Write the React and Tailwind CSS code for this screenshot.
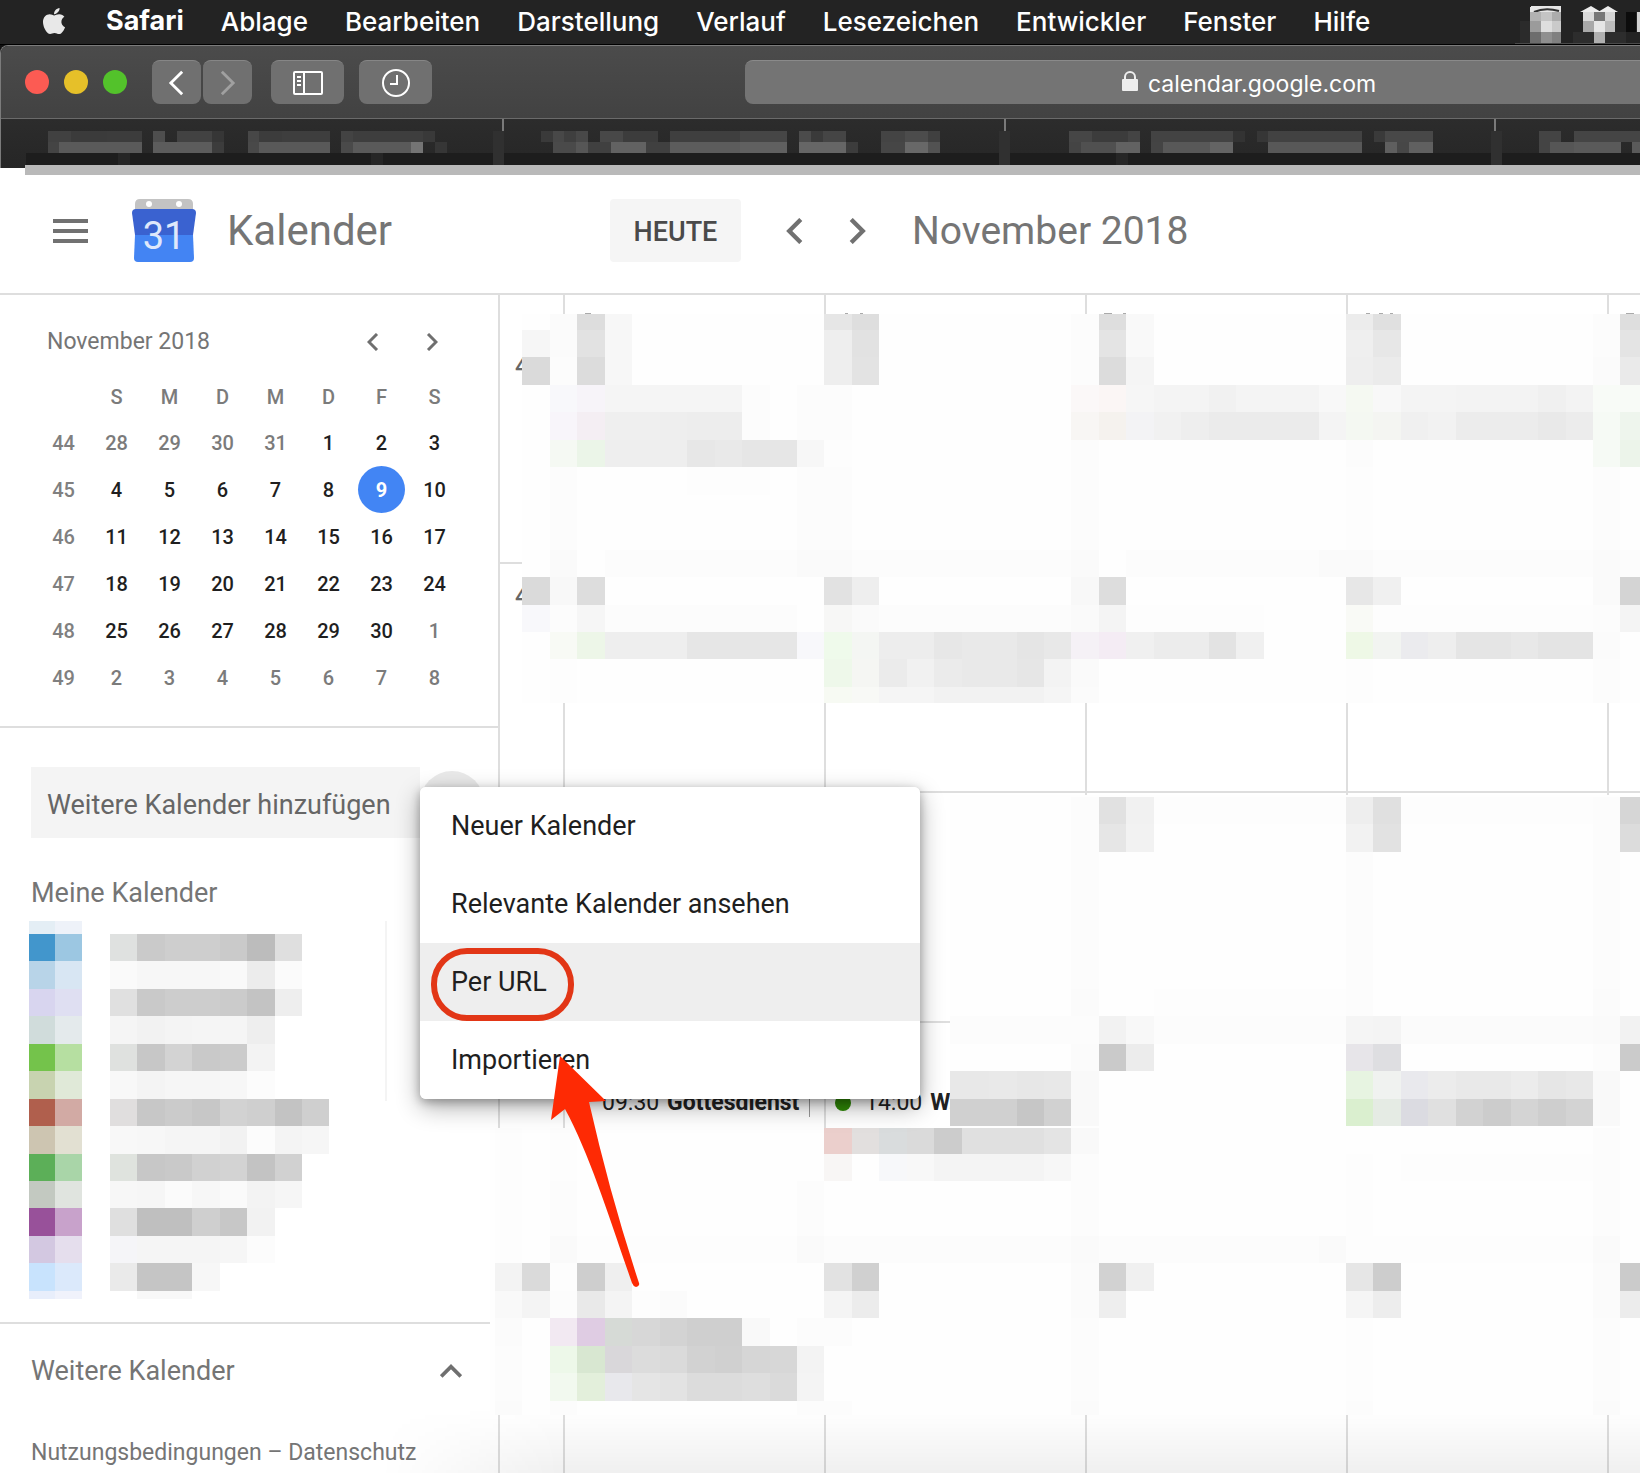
import React from "react";
import { FaApple } from "react-icons/fa";

const MENUS = ["Ablage", "Bearbeiten", "Darstellung", "Verlauf", "Lesezeichen", "Entwickler", "Fenster", "Hilfe"];

const WEEKS = [
  [44, [28, 29, 30, 31, 1, 2, 3]],
  [45, [4, 5, 6, 7, 8, 9, 10]],
  [46, [11, 12, 13, 14, 15, 16, 17]],
  [47, [18, 19, 20, 21, 22, 23, 24]],
  [48, [25, 26, 27, 28, 29, 30, 1]],
  [49, [2, 3, 4, 5, 6, 7, 8]],
];

// Censored month area: "row: col color[*span] ..." on a 27.45px raster.
const MONTH_TOP = {
  "-1": "2 fb|3 dd|4 f7|12 e6|13 de|21 fc|22 de|23 f9|31 ec|32 e0|40 fc|41 de",
  0: "1 f6|2 fb|3 e2|4 f7|12 ee|13 e2|21 fc|22 e4|23 f9|31 ef|32 e7|40 fc|41 e4",
  1: "1 da|2 fc|3 dc|4 f7|12 ee|13 e3|21 fc|22 dc|23 f5|31 ee|32 eb|40 fb|41 ea",
  2: "2 f8f8fb|3 f7f4f9|4 f5*5|9 fc|11 fc*2|21 fbf8f8|22 fbf6f5|23 f6|24 f4*2|26 f1|27 f4*3|30 f8|31 f5f9f2|32 f8|33 f4*2|35 f3*3|38 f0|39 f3|40 f8fbf7*2",
  3: "2 f8f5fa|3 f4eef3|4 ef*2|6 ee|7 ed*2|9 fc|11 fc*2|21 f8f6f4|22 f5f2ee|23 f3f3f5|24 f1|25 ee|26 eb*4|30 f4|31 f4f8f2|32 f4f5f2|33 f0|34 f2|35 ec*3|38 e9|39 ec|40 f6faf5|41 eef5ed",
  4: "2 f5f9f3|3 ebf5e8|4 ee*3|7 e7|8 e9|9 e6*2|11 f7|12 fd|21 fc|31 fc|40 f6faf5|41 ecf4ea",
  5: "2 fc|7 fd*3|11 fc*2|21 fc|31 fd|40 fc",
  6: "2 fc|11 fc*2|21 fc|31 fd|40 fc",
  7: "2 fc|11 fc*2|21 fc|31 fd|40 fc",
  8: "2 fa|4 fc*7|11 fa*2|13 fc*8|21 fa|23 fc*7|30 fa*2|32 fc*8|40 fa|41 fc",
  9: "1 da|2 f8|3 dd|12 e2|13 ee|21 f8|22 dd|31 e7|32 f0|40 fa|41 d4",
  10: "1 f8f8fb|2 fc|3 f6|4 fc*7|12 f7f7f6|13 fa|14 fc*7|21 fa|22 f4|23 fd*5|31 f9faf6|32 fd*8|40 fc|41 f4",
  11: "2 f8faf5|3 edf6e8|4 ee*3|7 e6*4|11 f8f8fb|12 effaeb|13 f4f6f3|14 ed*2|16 e7|17 e9*2|19 e5|20 e8|21 f5f1f6|22 f4ecf4|23 f0|24 ec*2|26 e3|27 f0|31 eef8e6|32 f2f4f1|33 ebebee|34 ee|35 e5*2|37 e8|38 e4*2|40 fb",
  12: "2 fd|12 eef8ea|13 f5f6f3|14 eb|15 f1|16 eb|17 e9*2|19 e6|20 f3|21 fa|31 fd|40 fc",
  13: "2 fd|12 f7faf3|13 f8f9f6|14 f5*2|16 f2*4|20 f5|21 fb|31 fd|40 fc",
};

const MONTH_RIGHT = {
  17: "21 fc|22 e1|23 f1|24 fd*7|31 ee|32 e0|33 fd*7|40 fc|41 d6",
  18: "21 fc|22 e6|23 f2|31 f2|32 e2|40 fc|41 dc",
  19: "21 fc|31 fc|40 fc",
  20: "21 fc|31 fc|40 fc",
  21: "21 fc|31 fc|40 fc",
  22: "21 fc|31 fc|40 fc",
  23: "21 fc|31 fc|40 fc",
  24: "21 fb|24 fd*7|31 fc|40 fb",
  25: "16 fc*6|22 f2|23 f8|24 fc*7|31 f5|32 f4|33 fb*7|40 fa|41 f2",
  26: "21 fb|22 ca|23 ec|31 e7e5e9|32 dedee1|40 fc|41 cb",
  27: "16 e8*2|18 e9|19 e7|20 e8|21 f9|31 e7f4e1|32 f0f2f0|33 e9e9ed|34 ec|35 e9*2|37 ec|38 e6|39 e8|40 f9",
  28: "16 d0*3|19 c6|20 d1|21 f9|31 daefcf|32 e5ebe4|33 dbdbe1|34 e0|35 d2|36 cc|37 d4|38 ce|39 d3|40 f9",
};

const MONTH_BOTTOM = {
  29: "0 fd|2 fd|12 ebcfcc|13 e2dfde|14 d9dcdd|15 da|16 cc|17 e0*3|20 e4|21 f9|40 fc",
  30: "0 fd|2 fd|12 f8f6f5|14 f7f8fa|15 f8|16 f4*4|20 f7|21 fc|31 fd|33 fd*7|40 fc",
  31: "0 fd|2 fc|11 fc|21 fc|31 fd|40 fc",
  32: "0 fd|2 fc|11 fc|21 fc|31 fd|40 fc",
  33: "0 fd|2 fa|3 fd*8|11 fa|12 fc*9|21 fa|22 fc*8|30 fa|31 fd*9|40 fa",
  34: "0 f3|1 da|2 fd|3 ce|4 ef|12 e2|13 d0|21 fb|22 d2|23 f0|31 e6|32 cd|40 fb|41 cb",
  35: "0 f9|1 f4|2 fc|3 e9|4 f4|5 fd|6 fb|12 f4|13 ec|21 fb|22 ee|31 f5|32 ed|40 fb|41 ec",
  36: "0 fb|2 f2e9f2|3 dfcce3|4 d6dad6|5 d7|6 d3|7 cf*2|9 f9|11 fc*2|21 fc|31 fd|40 fc",
  37: "0 fc|2 edf8e9|3 d8e7d1|4 d9d7da|5 dc|6 da|7 d2|8 d0|9 d6|10 d7|11 f3|21 fc|31 fd|40 fc",
  38: "0 fc|2 f2f9ef|3 e3efdb|4 e8e8ec|5 e5|6 e3|7 dc*2|9 de|10 da|11 f4|21 fc|31 fd|40 fc",
  39: "0 fb|2 fc|11 fc*2|21 fb|31 fc|40 fb",
};

const LIST = {
  21: "1 e4eef5|2 eef2f9",
  22: "1 4296cc|2 9cc7e2|4 dfe1e0|5 ca|6 ce*2|8 ca|9 bc|10 df",
  23: "1 b8d4e8|2 d8e6f3|4 fa|5 f7*3|8 f9|9 ec|10 fb",
  24: "1 d8d5ef|2 dfdff2|4 e0|5 c9|6 cd*2|8 cb|9 c3|10 ee",
  25: "1 d0dcdb|2 e4eaec|4 f5|5 f2|6 f4|7 f5*2|9 ee",
  26: "1 74c34b|2 b6dfa1|4 dfe1df|5 c7|6 d3|7 c9|8 cb|9 f3",
  27: "1 c8d3b0|2 e0e9d8|4 f8|5 f4|6 f6*2|8 f7|9 fc",
  28: "1 b05f4d|2 d2aaa4|4 e0dede|5 c7|6 cb|7 c7|8 d2|9 cf|10 c3|11 cf",
  29: "1 cdc5b1|2 e2e0d2|4 f8|5 f7|6 f5*2|8 f2|9 fc|10 f4|11 f6",
  30: "1 5caf58|2 a9d5a8|4 dfe3de|5 c7|6 c9|7 d1|8 d3|9 c3|10 d1",
  31: "1 c3c9c1|2 e0e4df|4 f7|5 f6|6 fb|7 f7|8 fa|9 f3|10 f6",
  32: "1 98519a|2 c8a2cb|4 df|5 bf*2|7 cf|8 c7|9 f2",
  33: "1 d3c8e1|2 e5deed|4 f5f5f8|5 f5*3|8 f6|9 fc",
  34: "1 c8e3fd|2 dbe9fb|4 ea|5 c5*2|7 f7",
  35: "1 e8eefb|2 f0f2fb|5 f8*2",
};

const CELL = 27.45;

function Mosaic({ data, originX, originY, clip, id, base }) {
  const [x0, y0, w, h] = clip;
  const cells = [];
  Object.entries(data).forEach(([row, line]) => {
    const r = Number(row);
    line.split("|").forEach((item) => {
      const [c, spec] = item.split(" ");
      const [hex, span] = spec.split("*");
      const fill = "#" + (hex.length === 2 ? hex + hex + hex : hex);
      const x = Math.round(originX + CELL * Number(c));
      const x2 = Math.round(originX + CELL * (Number(c) + Number(span || 1)));
      const y = Math.round(originY + CELL * r);
      const y2 = Math.round(originY + CELL * (r + 1));
      cells.push(<rect key={row + c} x={x} y={y} width={x2 - x} height={y2 - y} fill={fill} />);
    });
  });
  return (
    <g>
      <clipPath id={id}>
        <rect x={x0} y={y0} width={w} height={h} />
      </clipPath>
      <g clipPath={`url(#${id})`}>
        {base && <rect x={x0} y={y0} width={w} height={h} fill={base} />}
        {cells}
      </g>
    </g>
  );
}

function CensoredAreas() {
  return (
    <svg
      className="pointer-events-none absolute left-0 top-0 z-10"
      width="1640"
      height="1473"
      shapeRendering="crispEdges"
      aria-hidden="true"
    >
      <Mosaic id="mt" data={MONTH_TOP} originX={495} originY={330} clip={[522, 314, 1118, 389]} base="#fefefe" />
      <Mosaic id="mr" data={MONTH_RIGHT} originX={495} originY={330} clip={[950, 795, 690, 334]} base="#fefefe" />
      <Mosaic id="mb" data={MONTH_BOTTOM} originX={495} originY={330} clip={[490, 1128, 1150, 287]} base="#fefefe" />
      <Mosaic id="ml" data={LIST} originX={0} originY={330} clip={[29, 921, 358, 378]} />
      <path d="M386 921v180" stroke="#f4f4f4" strokeWidth="2" />
      <path d="M585 313h6M845 313h3M860 313h3M1104 313h8M1123 313h3M1366 313h4M1379 313h4M1390 313h3M1626 313h8" stroke="#aaa" strokeWidth="1" />
    </svg>
  );
}

// Censored tab titles: [x, right edge, grey] runs for the two visible raster rows.
const TAB_ROW_1 = [
  [47, 70, "#414141"], [70, 106, "#3b3b3b"], [106, 141, "#3c3c3c"], [152, 164, "#4e4e4e"], [176, 211, "#424242"],
  [211, 223, "#363636"], [247, 258, "#474747"], [258, 281, "#3c3c3c"], [281, 329, "#3e3e3e"], [340, 352, "#434343"],
  [352, 422, "#3e3e3e"], [422, 434, "#393939"], [540, 552, "#3a3a3a"], [552, 563, "#484848"], [563, 575, "#3f3f3f"],
  [575, 587, "#484848"], [599, 622, "#484848"], [622, 657, "#3c3c3c"], [669, 739, "#3f3f3f"], [739, 786, "#464646"],
  [798, 810, "#4b4b4b"], [810, 822, "#3a3a3a"], [822, 845, "#454545"], [880, 904, "#444444"], [904, 927, "#4c4c4c"],
  [927, 939, "#404040"], [1068, 1091, "#464646"], [1091, 1127, "#3c3c3c"], [1127, 1139, "#444444"],
  [1150, 1232, "#434343"], [1232, 1244, "#333333"], [1256, 1267, "#363636"], [1267, 1361, "#424242"],
  [1373, 1384, "#3a3a3a"], [1384, 1432, "#484848"], [1538, 1560, "#444444"], [1573, 1640, "#454545"],
];
const TAB_ROW_2 = [
  [47, 58, "#444444"], [58, 141, "#5a5a5a"], [152, 211, "#5c5c5c"], [211, 223, "#3c3c3c"], [247, 258, "#494949"],
  [258, 329, "#595959"], [340, 352, "#4a4a4a"], [352, 410, "#5a5a5a"], [410, 422, "#747474"], [434, 446, "#363636"],
  [552, 575, "#4a4a4a"], [575, 587, "#565656"], [587, 610, "#404040"], [610, 645, "#626262"], [645, 669, "#404040"],
  [669, 739, "#5c5c5c"], [739, 786, "#606060"],
  [798, 845, "#666666"], [845, 857, "#3c3c3c"], [880, 904, "#464646"], [904, 927, "#686868"], [927, 939, "#525252"],
  [1068, 1080, "#444444"], [1080, 1115, "#505050"], [1115, 1139, "#626262"], [1150, 1162, "#444444"],
  [1162, 1209, "#585858"], [1209, 1232, "#646464"], [1267, 1361, "#585858"], [1384, 1396, "#5f5f5f"],
  [1396, 1408, "#474747"], [1408, 1432, "#606060"], [1538, 1549, "#444444"], [1549, 1573, "#565656"],
  [1573, 1620, "#5a5a5a"], [1631, 1640, "#5a5a5a"],
];

function TabBar() {
  return (
    <div className="relative h-[49px] overflow-hidden bg-gradient-to-b from-[#2c2c2c] to-[#262626]">
      <svg className="absolute left-0 top-0" width="1640" height="49" shapeRendering="crispEdges" aria-hidden="true">
        <path d="M502 0v12M1004 0v12M1494 0v12" stroke="#7a7a7a" strokeWidth="2" />
        <rect x="25" y="34" width="1615" height="15" fill="#1d1d1d" />
        {[492, 998, 1490].map((x) => (
          <rect key={x} x={x} y="12" width="11" height="34" fill="#303030" />
        ))}
        {[117, 370, 1115].map((x) => (
          <rect key={x} x={x} y="34" width="12" height="12" fill="#262626" />
        ))}
        {TAB_ROW_1.map(([a, b, c]) => (
          <rect key={a} x={a} y="12" width={b - a} height="11" fill={c} />
        ))}
        {TAB_ROW_2.map(([a, b, c]) => (
          <rect key={a} x={a} y="23" width={b - a} height="11" fill={c} />
        ))}
      </svg>
    </div>
  );
}

function StatusIcons() {
  return (
    <svg className="ml-auto shrink-0" width="125" height="45" shapeRendering="crispEdges" aria-hidden="true">
      <rect x="0" y="43" width="125" height="2" fill="#4a4a4a" />
      <rect x="5" y="21" width="10" height="22" fill="#2b2b2b" />
      <path d="M15 12V8q0-2 2-2h27q2 0 2 2v4z" fill="#e6e6e6" />
      <path d="M19 12q11-5 25-1" stroke="#333" strokeWidth="2" fill="none" shapeRendering="auto" />
      <rect x="15" y="12" width="11" height="9" fill="#b2b2b2" /><rect x="26" y="12" width="11" height="9" fill="#c4c4c4" /><rect x="37" y="12" width="9" height="9" fill="#acacac" />
      <rect x="15" y="21" width="11" height="11" fill="#9b9b9b" /><rect x="26" y="21" width="11" height="11" fill="#dedede" /><rect x="37" y="21" width="9" height="11" fill="#cacaca" />
      <rect x="15" y="32" width="11" height="11" fill="#6d6d6d" /><rect x="26" y="32" width="11" height="11" fill="#8f8f8f" /><rect x="37" y="32" width="9" height="11" fill="#808080" />
      <path d="M65 12 76 6 86 12zM83 12 93 6 103 12z" fill="#ececec" shapeRendering="auto" />
      <rect x="68" y="12" width="11" height="9" fill="#dadada" /><rect x="79" y="12" width="11" height="9" fill="#777" /><rect x="90" y="12" width="10" height="9" fill="#d4d4d4" />
      <rect x="68" y="21" width="11" height="11" fill="#a9a9a9" /><rect x="79" y="21" width="11" height="11" fill="#e6e6e6" /><rect x="90" y="21" width="10" height="11" fill="#bdbdbd" />
      <rect x="58" y="32" width="21" height="11" fill="#2d2d2d" /><rect x="79" y="32" width="11" height="11" fill="#b0b0b0" /><rect x="90" y="32" width="21" height="11" fill="#2d2d2d" />
      <rect x="111" y="12" width="10" height="20" fill="#0c0c0c" /><rect x="122" y="12" width="3" height="20" fill="#d0d0d0" />
    </svg>
  );
}

function Chevron({ dir, size, color = "#6f6f6f", stroke = 2 }) {
  const d = { left: "M10 1 2 9l8 8", right: "M2 1l8 8-8 8", up: "M1 10l8-8 8 8" }[dir];
  const box = dir === "up" ? "0 0 18 12" : "0 0 12 18";
  return (
    <svg viewBox={box} className={size} fill="none" stroke={color} strokeWidth={stroke} aria-hidden="true">
      <path d={d} />
    </svg>
  );
}

const TOOL_BUTTON =
  "flex h-11 items-center justify-center rounded-lg border-t border-[#868686] bg-[#707070] text-white";

function BrowserWindow() {
  return (
    <div className="bg-[#111]">
      <div className="relative overflow-hidden rounded-tl-lg border-l border-t border-[#7b7b7b]">
        <div className="flex h-[73px] items-center overflow-hidden border-b border-[#6a6a6a] bg-gradient-to-b from-[#4b4b4b] to-[#424242] pl-6">
          <div className="flex shrink-0 gap-[15px]">
            <button aria-label="Schließen" className="size-6 rounded-full bg-[#fc5b53]" />
            <button aria-label="Minimieren" className="size-6 rounded-full bg-[#e6c029]" />
            <button aria-label="Vollbild" className="size-6 rounded-full bg-[#53c22b]" />
          </div>
          <div className="ml-[25px] flex shrink-0 gap-[2px]">
            <button aria-label="Zurück" className={`${TOOL_BUTTON} w-[49px]`}>
              <Chevron dir="left" size="h-[26px] w-[17px]" color="#fff" />
            </button>
            <button aria-label="Vorwärts" className={`${TOOL_BUTTON} w-[49px]`}>
              <Chevron dir="right" size="h-[26px] w-[17px]" color="#a0a0a0" />
            </button>
          </div>
          <button aria-label="Seitenleiste" className={`${TOOL_BUTTON} ml-[19px] w-[73px] shrink-0`}>
            <svg width="30" height="24" viewBox="0 0 30 24" fill="none" stroke="currentColor" strokeWidth="2" aria-hidden="true">
              <rect x="1" y="1" width="28" height="22" rx="1" />
              <path d="M11 1v22M4 6h4M4 10h4M4 14h4" />
            </svg>
          </button>
          <button aria-label="Verlauf" className={`${TOOL_BUTTON} ml-[15px] w-[73px] shrink-0`}>
            <svg width="28" height="28" viewBox="0 0 28 28" fill="none" stroke="currentColor" strokeWidth="2" aria-hidden="true">
              <circle cx="14" cy="14" r="13" />
              <path d="M15 6v9H8" />
            </svg>
          </button>
          <label className="ml-[313px] flex h-11 w-[1008px] shrink-0 items-center justify-center rounded-lg border-t border-[#8a8a8a] bg-[#747474] pl-1">
            <svg width="16" height="20" viewBox="0 0 16 20" className="mb-1 mr-[10px] shrink-0" aria-hidden="true">
              <path d="M3 9V6a5 5 0 0 1 10 0v3" fill="none" stroke="#eee" strokeWidth="2" />
              <rect y="8" width="16" height="12" rx="1" fill="#eee" />
            </svg>
            <input
              aria-label="Adresse"
              readOnly
              value="calendar.google.com"
              className="w-[232px] bg-transparent pt-[2px] font-[Inter,sans-serif] text-[23px] leading-8 text-white outline-none"
            />
          </label>
        </div>
        <TabBar />
      </div>
    </div>
  );
}

function CalendarLogo() {
  return (
    <svg width="64" height="64" viewBox="0 0 64 64" className="shrink-0" aria-hidden="true">
      <path d="M3 12V5q0-5 5-5h48q5 0 5 5v7z" fill="#c3c3c3" />
      <circle cx="17" cy="5" r="3" fill="#fff" />
      <circle cx="47" cy="5" r="3" fill="#fff" />
      <path d="M4 10h56q4 0 4 4l-3 22H3L0 14q0-4 4-4z" fill="#3a62d0" />
      <path d="M3 36h58l1 23q0 4-4 4H6q-4 0-4-4z" fill="#4384f3" />
      <text x="32" y="50" textAnchor="middle" fill="#dfe8fb" fontSize="38" fontWeight="400" fontFamily="Roboto, sans-serif">31</text>
    </svg>
  );
}

function AppHeader() {
  return (
    <header className="flex h-[127px] items-center overflow-hidden border-b-2 border-[#dedede] bg-white">
      <div className="flex w-[610px] shrink-0 items-center pl-[53px]">
        <button aria-label="Hauptmenü" className="flex w-[35px] flex-col gap-[6px]">
          <span className="h-1 bg-[#717171]" />
          <span className="h-1 bg-[#717171]" />
          <span className="h-1 bg-[#717171]" />
        </button>
        <div className="ml-11">
          <CalendarLogo />
        </div>
        <h1 className="ml-[31px] text-[42px] leading-[48px] text-[#757575]">Kalender</h1>
      </div>
      <button className="h-[63px] w-[131px] shrink-0 rounded bg-[#f5f5f5] pt-1 text-[27px] font-medium text-[#4a4a4a]">HEUTE</button>
      <button aria-label="Vorheriger Monat" className="ml-[45px] shrink-0">
        <Chevron dir="left" size="h-[26px] w-[18px]" color="#717171" stroke="3" />
      </button>
      <button aria-label="Nächster Monat" className="ml-11 shrink-0">
        <Chevron dir="right" size="h-[26px] w-[18px]" color="#717171" stroke="3" />
      </button>
      <h2 className="ml-[46px] whitespace-nowrap text-[39px] leading-[48px] text-[#757575]">November 2018</h2>
    </header>
  );
}

function MiniCalendar() {
  return (
    <section className="border-b-2 border-[#dedede] pb-[25px] pt-[23px]">
      <div className="mb-2 flex h-12 items-center pl-[47px] pr-[60px]">
        <h3 className="flex-1 text-[23px] leading-8 text-[#757575]">November 2018</h3>
        <button aria-label="Monat zurück">
          <Chevron dir="left" size="h-[18px] w-3" stroke="3" />
        </button>
        <button aria-label="Monat vor" className="ml-[47px]">
          <Chevron dir="right" size="h-[18px] w-3" stroke="3" />
        </button>
      </div>
      <table className="ml-[37px] w-[424px] table-fixed border-collapse text-center text-[20px] font-medium leading-6 text-[#1f1f1f]">
        <thead>
          <tr className="h-[45px] text-[#7b7b7b]">
            <td className="p-0" />
            {["S", "M", "D", "M", "D", "F", "S"].map((d, i) => (
              <th key={i} className="p-0 font-medium">{d}</th>
            ))}
          </tr>
        </thead>
        <tbody>
          {WEEKS.map(([week, days], w) => (
            <tr key={week} className="h-[47px]">
              <th className="p-0 font-medium text-[#808080]">{week}</th>
              {days.map((d, i) => {
                const other = (w === 0 && d > 20) || (w > 3 && d < 10);
                const today = w === 1 && d === 9;
                return (
                  <td key={i} className="p-0">
                    {today ? (
                      <span className="mx-auto flex size-[47px] items-center justify-center rounded-full bg-[#4285f4] font-bold text-white">9</span>
                    ) : (
                      <span className={other ? "text-[#7b7b7b]" : ""}>{d}</span>
                    )}
                  </td>
                );
              })}
            </tr>
          ))}
        </tbody>
      </table>
    </section>
  );
}

function AddMenu() {
  return (
    <ul role="menu" className="absolute left-0 top-4 z-20 w-[500px] overflow-hidden rounded-md bg-white text-[27px] shadow-[0_8px_24px_rgba(0,0,0,0.32),0_3px_10px_rgba(0,0,0,0.28)]">
      {["Neuer Kalender", "Relevante Kalender ansehen", "Per URL", "Importieren"].map((t) => (
        <li key={t} role="none">
          <button
            role="menuitem"
            className={`flex h-[78px] w-full items-center pl-[31px] pt-[2px] text-[#1f1f1f] ${t === "Per URL" ? "bg-[#eeeeee]" : "bg-white"}`}
          >
            {t}
          </button>
        </li>
      ))}
    </ul>
  );
}

function Annotations() {
  return (
    <svg className="pointer-events-none absolute left-[420px] top-[940px] z-30" width="240" height="360" aria-hidden="true">
      <rect x="14" y="11" width="137" height="67" rx="33" fill="none" stroke="#e23616" strokeWidth="6" />
      <path d="M140 116 186 161 169 162Q190 255 219 343Q220 346 216 347Q213 346 212 343C190 280 170 215 145 169L131 180Z" fill="#fe2a04" />
    </svg>
  );
}

function Sidebar() {
  return (
    <aside className="w-[500px] shrink-0 border-r-2 border-[#dedede]">
      <MiniCalendar />
      <div className="mt-[39px] flex h-[71px] items-center pl-[31px]">
        <input
          aria-label="Weitere Kalender hinzufügen"
          placeholder="Weitere Kalender hinzufügen"
          className="h-[71px] w-[389px] bg-[#f4f4f4] pl-4 pt-1 text-[27px] text-[#5f5f5f] outline-none placeholder:text-[#666]"
        />
        <div className="relative size-16">
          <button aria-label="Kalender hinzufügen" className="size-16 rounded-full bg-[#e9e9e9]" />
          <AddMenu />
        </div>
      </div>
      <h3 className="mt-[39px] h-8 pl-[31px] text-[27px] leading-8 text-[#757575]">Meine Kalender</h3>
      <div className="h-[415px] border-b-2 border-[#dedede]" />
      <div className="flex h-[94px] items-center pl-[31px] pr-[36px]">
        <h3 className="flex-1 text-[27px] text-[#757575]">Weitere Kalender</h3>
        <button aria-label="Einklappen">
          <Chevron dir="up" size="h-[15px] w-[22px]" stroke="3" />
        </button>
      </div>
      <p className="mt-[19px] h-[31px] whitespace-nowrap pl-[31px] text-[23px] leading-8 text-[#757575]">
        <a href="#terms">Nutzungsbedingungen</a> – <a href="#privacy">Datenschutz</a>
      </p>
    </aside>
  );
}

const ROWS = [
  { label: "4", height: "h-[269px]", pad: "pt-[59px]" },
  { label: "4", height: "h-[229px]", pad: "pt-[20px]" },
  { height: "h-[230px]", pad: "" },
  { height: "h-[230px]", pad: "", events: true },
  { height: "h-[220px]", pad: "" },
];

function MonthGrid() {
  return (
    <section className="min-w-0 flex-1 overflow-hidden" aria-label="Monatsansicht">
      {ROWS.map((row, i) => (
        <div key={i} className={`flex border-[#dedede] ${i < 4 ? "border-b-2" : ""} ${row.height}`}>
          <div className={`w-[65px] shrink-0 border-r-2 border-[#dedede] pl-[15px] text-[24px] font-medium leading-6 text-[#666] ${row.pad}`}>
            {row.label}
          </div>
          {[0, 1, 2, 3, 4].map((c) => (
            <div key={c} className="w-[261px] shrink-0 border-r-2 border-[#dedede] pt-[66px] text-[23px] leading-7 text-[#222]">
              {row.events && c === 0 && (
                <div className="flex justify-between whitespace-nowrap pl-[37px] pr-[14px]">
                  <span>09:30 <b className="ml-[2px] font-bold">Gottesdienst</b></span>
                  <span className="border-r border-[#999]" />
                </div>
              )}
              {row.events && c === 1 && (
                <div className="flex items-center whitespace-nowrap pl-[9px]">
                  <span className="mr-[14px] size-4 rounded-full bg-[#2f8a06]" />
                  14:00 <b className="ml-2 font-bold">W.</b>
                </div>
              )}
            </div>
          ))}
        </div>
      ))}
    </section>
  );
}

export default function App() {
  return (
    <div className="relative min-h-screen overflow-hidden bg-white font-[Roboto,sans-serif]">
      <nav className="flex h-[45px] items-center overflow-hidden border-b border-black bg-[#232323] font-[Inter,sans-serif] text-[26px] font-medium text-white">
        <FaApple className="ml-[38px] size-8 shrink-0 pb-[2px] text-[#e8e8e8]" />
        <div className="ml-[36px] flex items-center gap-[37px] pb-[2px]">
          <button className="text-[27px] font-bold">Safari</button>
          {MENUS.map((m) => (
            <button key={m}>{m}</button>
          ))}
        </div>
        <StatusIcons />
      </nav>
      <BrowserWindow />
      <div className="absolute left-[25px] right-0 top-[165px] h-[10px] bg-[#b9b9b9]" />
      <AppHeader />
      <main className="relative flex bg-white">
        <Sidebar />
        <MonthGrid />
        <div className="pointer-events-none absolute bottom-0 left-[380px] right-0 h-16 bg-gradient-to-b from-transparent to-black/6 [mask-image:linear-gradient(to_right,transparent,black_180px)]" />
      </main>
      <CensoredAreas />
      <Annotations />
    </div>
  );
}
